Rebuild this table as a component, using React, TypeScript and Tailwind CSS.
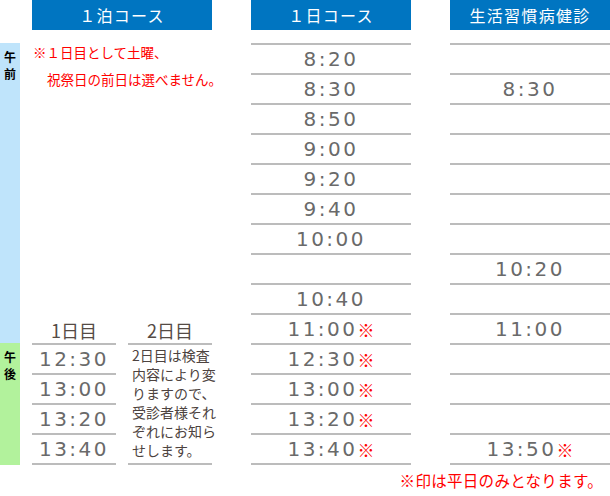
const jp = { fontFamily: '"Noto Sans CJK JP", "Noto Sans", sans-serif' };
const num = { fontFamily: '"DejaVu Sans", "Noto Sans CJK JP", sans-serif' };

type Slot = { time: string; mark?: boolean };

const oneDay: Slot[] = [
    { time: "8:20" },
    { time: "8:30" },
    { time: "8:50" },
    { time: "9:00" },
    { time: "9:20" },
    { time: "9:40" },
    { time: "10:00" },
    { time: "" },
    { time: "10:40" },
    { time: "11:00", mark: true },
    { time: "12:30", mark: true },
    { time: "13:00", mark: true },
    { time: "13:20", mark: true },
    { time: "13:40", mark: true },
];

const lifestyle: Slot[] = [
    { time: "" },
    { time: "8:30" },
    { time: "" },
    { time: "" },
    { time: "" },
    { time: "" },
    { time: "" },
    { time: "10:20" },
    { time: "" },
    { time: "11:00" },
    { time: "" },
    { time: "" },
    { time: "" },
    { time: "13:50", mark: true },
];

const overnight = ["12:30", "13:00", "13:20", "13:40"];

const Header = ({ label }: { label: string }) => (
    <div
        className="h-[30px] bg-[#0075c1] text-white text-[16px] tracking-[1.3px] flex items-center justify-center"
        style={jp}
    >
        {label}
    </div>
);

const TimeRow = ({ slot }: { slot: Slot }) => (
    <div className="h-[30px] border-t-2 border-[#bcbcbc] flex items-center justify-center">
        {slot.time && (
            <span className="text-[20px] tracking-[2.5px] text-[#6a6a6a] leading-none" style={num}>
                {slot.time}
            </span>
        )}
        {slot.mark && (
            <span className="text-[17px] text-[#ff0000] leading-none" style={jp}>
                ※
            </span>
        )}
    </div>
);

const TimeColumn = ({ label, slots, className }: { label: string; slots: Slot[]; className: string }) => (
    <div className={className}>
        <Header label={label} />
        <div className="mt-[13px] border-b-2 border-[#bcbcbc]">
            {slots.map((slot, i) => (
                <TimeRow key={i} slot={slot} />
            ))}
        </div>
    </div>
);

export default function App() {
    return (
        <div className="w-[610px] h-[496px] bg-white" style={jp}>
            <div className="flex">
                {/* 午前 / 午後 side bar */}
                <div className="w-[20px] flex flex-col">
                    <div className="h-[43px]" />
                    <div className="h-[300px] bg-[#bfe4fb] flex flex-col items-center pt-[5px] text-[12px] font-bold leading-[17px] text-black">
                        <span>午</span>
                        <span>前</span>
                    </div>
                    <div className="h-[122px] bg-[#b2f29c] flex flex-col items-center pt-[5px] text-[12px] font-bold leading-[17px] text-black">
                        <span>午</span>
                        <span>後</span>
                    </div>
                </div>

                {/* 1泊コース */}
                <div className="w-[180px] ml-[12px] flex flex-col">
                    <Header label="１泊コース" />
                    <div className="text-[13.5px] text-[#ff0000] leading-[27px] pt-[9px] pl-px whitespace-nowrap">
                        <div>※１日目として土曜、</div>
                        <div className="pl-[14px]">祝祭日の前日は選べません。</div>
                    </div>
                    <div className="mt-auto flex gap-[12px] pb-[4px] text-[18px] text-[#554b45] leading-none">
                        <div className="w-[84px] text-center">1日目</div>
                        <div className="w-[84px] text-center">2日目</div>
                    </div>
                    <div className="flex gap-[12px]">
                        <div className="w-[84px] border-b-2 border-[#bcbcbc]">
                            {overnight.map((t) => (
                                <TimeRow key={t} slot={{ time: t }} />
                            ))}
                        </div>
                        <div className="w-[84px] h-[122px] border-t-2 border-b-2 border-[#bcbcbc] pl-[4px] pt-[1px] text-[14px] leading-[19px] text-[#4d4340] whitespace-nowrap">
                            <div>2日目は検査</div>
                            <div>内容により変</div>
                            <div>りますので、</div>
                            <div>受診者様それ</div>
                            <div>ぞれにお知ら</div>
                            <div>せします。</div>
                        </div>
                    </div>
                </div>

                <TimeColumn label="１日コース" slots={oneDay} className="w-[160px] ml-[39px]" />
                <TimeColumn label="生活習慣病健診" slots={lifestyle} className="w-[160px] ml-[39px]" />
            </div>

            <div className="h-[31px] flex items-center justify-end pr-[7px] text-[15.5px] tracking-[0.3px] text-[#ff0000]">
                ※印は平日のみとなります。
            </div>
        </div>
    );
}
